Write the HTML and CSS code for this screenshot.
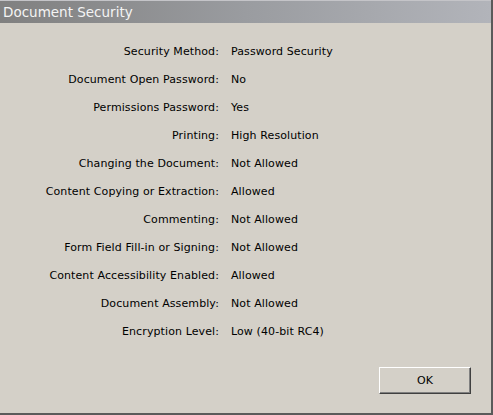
FILE: index.html
```html
<!DOCTYPE html>
<html>
<head>
<meta charset="utf-8">
<link rel="stylesheet" href="styles.css">
</head>
<body>
<div class="dialog">
  <div class="titlebar">Document Security</div>
  <div class="content">
    <div class="grid">
      <div class="label">Security Method:</div><div class="value">Password Security</div>
      <div class="label">Document Open Password:</div><div class="value">No</div>
      <div class="label">Permissions Password:</div><div class="value">Yes</div>
      <div class="label">Printing:</div><div class="value">High Resolution</div>
      <div class="label">Changing the Document:</div><div class="value">Not Allowed</div>
      <div class="label">Content Copying or Extraction:</div><div class="value">Allowed</div>
      <div class="label">Commenting:</div><div class="value">Not Allowed</div>
      <div class="label">Form Field Fill-in or Signing:</div><div class="value">Not Allowed</div>
      <div class="label">Content Accessibility Enabled:</div><div class="value">Allowed</div>
      <div class="label">Document Assembly:</div><div class="value">Not Allowed</div>
      <div class="label">Encryption Level:</div><div class="value">Low (40-bit RC4)</div>
    </div>
    <div class="footer">
      <button class="ok">OK</button>
    </div>
  </div>
</div>
</body>
</html>
```
FILE: styles.css
```css
html, body {
  margin: 0;
  padding: 0;
  background: #d4d0c8;
}
.dialog {
  width: 491px;
  height: 413px;
  border-right: 2px solid #5a5a5a;
  border-bottom: 2px solid #5a5a5a;
  background: #d4d0c8;
  display: flex;
  flex-direction: column;
  font-family: "DejaVu Sans", Tahoma, sans-serif;
  font-size: 11px;
  color: #000;
}
.titlebar {
  height: 23px;
  box-sizing: border-box;
  border-top: 1px solid #c4c4c8;
  background: linear-gradient(to right, #808080 0%, #9a9ca0 50%, #b2b4ba 100%);
  color: #f4f4f4;
  font-family: "DejaVu Sans", Verdana, sans-serif;
  font-size: 13.5px;
  line-height: 22px;
  padding-left: 3px;
}
.content {
  flex: 1;
  display: flex;
  flex-direction: column;
}
.grid {
  display: grid;
  grid-template-columns: 219px auto;
  column-gap: 12px;
  row-gap: 0;
  margin-top: 14px;
  grid-auto-rows: 28px;
  align-items: center;
  letter-spacing: 0.1px;
}
.label {
  text-align: right;
  white-space: nowrap;
}
.value {
  white-space: nowrap;
}
.footer {
  margin-top: auto;
  display: flex;
  justify-content: flex-end;
  padding: 0 20px 19px 0;
}
.ok {
  width: 92px;
  height: 27px;
  box-sizing: border-box;
  background: #d4d0c8;
  font-family: "DejaVu Sans", Tahoma, sans-serif;
  font-size: 11px;
  color: #000;
  border-style: solid;
  border-width: 1px;
  border-color: #ffffff #404040 #404040 #ffffff;
  box-shadow: inset -1px -1px 0 #808080;
  padding: 0;
}
```
